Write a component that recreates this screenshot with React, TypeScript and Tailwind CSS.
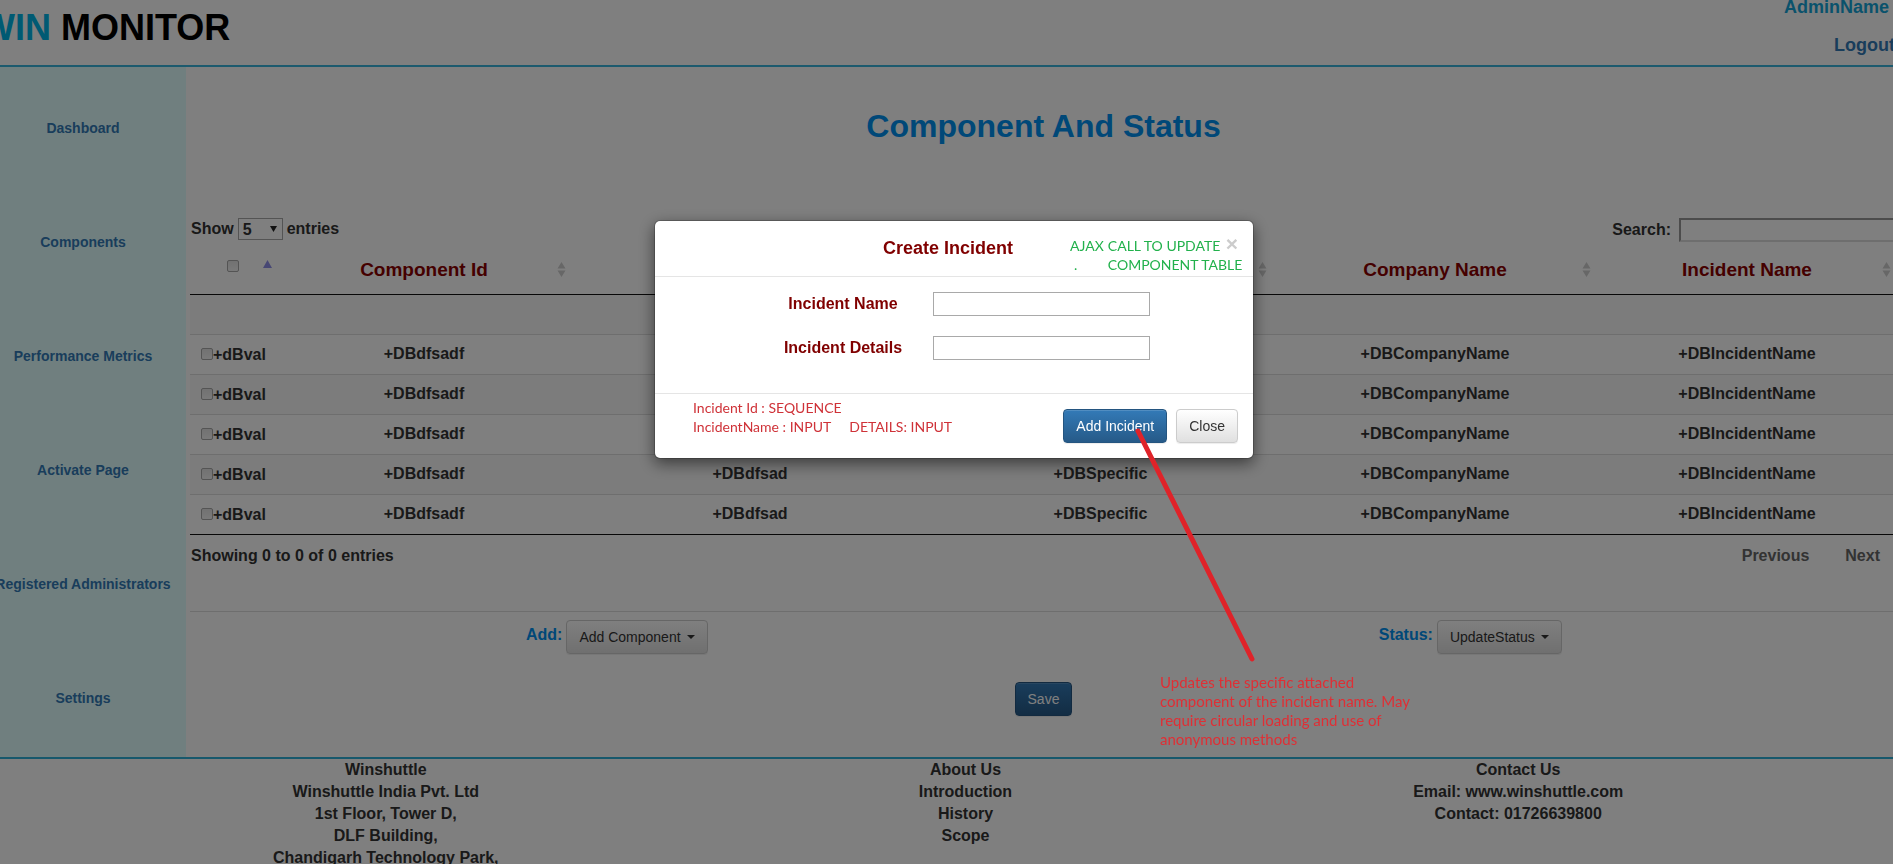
import type { ReactNode } from "react";

const navItems = [
  "Dashboard",
  "Components",
  "Performance Metrics",
  "Activate Page",
  "Registered Administrators",
  "Settings",
];

const columns = [
  { label: "Component Id", width: "w-[296px]" },
  { label: "Component Name", width: "w-[356px]" },
  { label: "Specific Status", width: "w-[345px]" },
  { label: "Company Name", width: "w-[324px]" },
  { label: "Incident Name", width: "w-[300px]" },
];

const rows = Array.from({ length: 5 }, () => [
  "+DBdfsadf",
  "+DBdfsad",
  "+DBSpecific",
  "+DBCompanyName",
  "+DBIncidentName",
]);

const footerColumns = [
  ["Winshuttle", "Winshuttle India Pvt. Ltd", "1st Floor, Tower D,", "DLF Building,", "Chandigarh Technology Park,"],
  ["About Us", "Introduction", "History", "Scope"],
  ["Contact Us", "Email: www.winshuttle.com", "Contact: 01726639800"],
];

function SortIcon() {
  return (
    <svg className="absolute right-1.5 top-5" width="9" height="15" viewBox="0 0 9 15" aria-hidden="true">
      <path d="M4.5 0 8.5 6.5h-8z M4.5 15 8.5 8.5h-8z" fill="#cfcfcf" />
    </svg>
  );
}

function Checkbox({ label }: { label: string }) {
  return (
    <input
      type="checkbox"
      aria-label={label}
      className="size-3 shrink-0 appearance-none rounded-[2px] border border-[#a8a8a8] bg-linear-to-b from-[#e4e4e4] to-[#f4f4f4]"
    />
  );
}

function DefaultButton({ children }: { children: ReactNode }) {
  return (
    <button
      type="button"
      className="inline-flex h-[34px] items-center gap-1.5 rounded border border-[#ccc] bg-linear-to-b from-white to-[#e0e0e0] px-3 text-sm font-normal text-[#333] shadow-[inset_0_1px_0_rgba(255,255,255,0.15),0_1px_1px_rgba(0,0,0,0.075)]"
    >
      {children}
    </button>
  );
}

function PrimaryButton({ children }: { children: ReactNode }) {
  return (
    <button
      type="button"
      className="inline-flex h-[34px] items-center rounded border border-[#245580] bg-linear-to-b from-[#337ab7] to-[#265a88] px-3 text-sm font-normal text-white shadow-[inset_0_1px_0_rgba(255,255,255,0.15),0_1px_1px_rgba(0,0,0,0.075)]"
    >
      {children}
    </button>
  );
}

function Caret() {
  return (
    <svg width="8" height="4" viewBox="0 0 8 4" aria-hidden="true">
      <path d="M0 0h8L4 4z" fill="#333" />
    </svg>
  );
}

function Header() {
  return (
    <header className="flex h-[67px] justify-between border-b-2 border-[#39b5dc]">
      <h1 className="pt-2 pl-px text-4xl font-bold text-black">
        <span className="text-[#00b4e6]">WIN</span> MONITOR
      </h1>
      <div className="flex flex-col items-end gap-[13px] pr-0.5 text-lg/[25px]">
        <span className="-mt-[5px] pr-1.5 text-[#15a5d8]">AdminName</span>
        <a href="#logout" className="text-[#337ab7]">Logout</a>
      </div>
    </header>
  );
}

function Sidebar() {
  return (
    <nav className="w-[206px] shrink-0 bg-[#e0ffff] pt-1 text-sm text-[#337ab7]">
      <ul>
        {navItems.map((item) => (
          <li key={item} className="flex h-[114px] items-center justify-center whitespace-nowrap">
            <a href={"#" + item.toLowerCase().replace(" ", "-")}>{item}</a>
          </li>
        ))}
      </ul>
    </nav>
  );
}

function ComponentTable() {
  return (
    <table className="w-full table-fixed border-collapse text-center">
      <thead>
        <tr className="h-[52px] border-b border-[#111]">
          <th className="relative w-[86px] pb-0.5">
            <Checkbox label="Select all" />
            <svg className="absolute right-1 top-[18px]" width="9" height="8" viewBox="0 0 9 8" aria-hidden="true">
              <path d="M4.5 0 9 8H0z" fill="#8f8fe8" />
            </svg>
          </th>
          {columns.map((column) => (
            <th key={column.label} className={"relative pt-1 text-[19px] text-[#8b0000] " + column.width}>
              {column.label}
              <SortIcon />
            </th>
          ))}
        </tr>
      </thead>
      <tbody className="text-[#333]">
        <tr className="h-10 bg-[#f9f9f9]">
          <td colSpan={6} />
        </tr>
        {rows.map((row, index) => (
          <tr key={index} className="h-10 border-t border-[#ddd] last:border-b last:border-b-[#111] even:bg-white odd:bg-[#f9f9f9]">
            <td className="py-0">
              <label className="flex items-center pl-[11px]">
                <Checkbox label={"Select row " + (index + 1)} />
                <span className="pt-0.5">+dBval</span>
              </label>
            </td>
            {row.map((cell) => (
              <td key={cell} className="py-0">{cell}</td>
            ))}
          </tr>
        ))}
      </tbody>
    </table>
  );
}

function Main() {
  return (
    <main className="min-w-0 flex-1 pl-1">
      <h2 className="pt-[41px] text-center text-[32px]/[36px] text-[#0090f0]">Component And Status</h2>
      <div className="flex items-start justify-between pt-[74px]">
        <label className="flex items-center gap-1 pl-px">
          Show
          <span className="relative flex">
            <select className="h-[22px] w-[45px] appearance-none border border-[#a9a9a9] bg-white pl-1 font-bold">
              <option>5</option>
            </select>
            <svg className="pointer-events-none absolute right-1.5 top-2" width="7" height="6" viewBox="0 0 7 6" aria-hidden="true">
              <path d="M0 0h7L3.5 6z" fill="#222" />
            </svg>
          </span>
          entries
        </label>
        <label className="flex items-center gap-2">
          Search:
          <input type="search" className="h-6 w-[218px] border-2 border-[#ddd] border-t-[#999] border-l-[#999] bg-white" />
        </label>
      </div>
      <ComponentTable />
      <div className="flex h-[77px] justify-between border-b border-[#ddd] pt-2.5">
        <p className="pl-px">Showing 0 to 0 of 0 entries</p>
        <div className="flex items-start gap-9 pr-[17px] text-[#666]">
          <button type="button">Previous</button>
          <button type="button">Next</button>
        </div>
      </div>
      <div className="grid grid-cols-2 pt-2">
        <div className="flex items-center justify-center gap-1">
          <span className="pb-1 text-[#0090f0]">Add:</span>
          <DefaultButton>Add Component <Caret /></DefaultButton>
        </div>
        <div className="flex items-center justify-center gap-1">
          <span className="pb-1 text-[#0090f0]">Status:</span>
          <DefaultButton>UpdateStatus <Caret /></DefaultButton>
        </div>
      </div>
      <div className="flex justify-center pt-7">
        <PrimaryButton>Save</PrimaryButton>
      </div>
    </main>
  );
}

function Footer() {
  return (
    <footer className="grid grid-cols-[812fr_348fr_758fr] border-t-2 border-[#2fb0d8] text-center">
      {footerColumns.map((lines) => (
        <div key={lines[0]}>
          {lines.map((line) => (
            <p key={line} className="leading-[22px]">{line}</p>
          ))}
        </div>
      ))}
    </footer>
  );
}

function IncidentDialog() {
  return (
    <div
      role="dialog"
      aria-labelledby="dialog-title"
      className="relative w-[600px] rounded-md border border-black/20 bg-white bg-clip-padding shadow-[0_5px_15px_rgba(0,0,0,0.5)]"
    >
      <div className="flex h-14 items-center justify-center border-b border-[#e5e5e5] pr-3 pb-0.5">
        <h3 id="dialog-title" className="text-lg text-[#800000]">Create Incident</h3>
        <button type="button" aria-label="Close dialog" className="absolute right-[15px] top-[11px] text-[21px]/[24px] font-bold text-[#ccc]">
          ×
        </button>
      </div>
      <form className="flex flex-col gap-5 pt-[15px] pb-[33px] pl-[98px] text-[#800000]">
        <div className="flex items-center">
          <label htmlFor="incident-name" className="w-[180px] text-center">Incident Name</label>
          <input id="incident-name" type="text" className="h-6 w-[217px] border border-[#a9a9a9] px-1" />
        </div>
        <div className="flex items-center">
          <label htmlFor="incident-details" className="w-[180px] text-center">Incident Details</label>
          <input id="incident-details" type="text" className="h-6 w-[217px] border border-[#a9a9a9] px-1" />
        </div>
      </form>
      <div className="flex justify-end gap-[9px] border-t border-[#e5e5e5] p-[15px]">
        <PrimaryButton>Add Incident</PrimaryButton>
        <DefaultButton>Close</DefaultButton>
      </div>

      <div className="absolute left-[415px] top-[15px] flex gap-1 font-[Lato,sans-serif] text-sm/[19px] font-normal whitespace-nowrap text-[#22b14c]">
        <p>
          AJAX
          <br />
          <span className="pl-1">.</span>
        </p>
        <p>
          CALL TO UPDATE
          <br />
          COMPONENT TABLE
        </p>
      </div>
      <div className="absolute left-[38px] top-[177px] font-[Lato,sans-serif] text-sm/[19px] font-normal whitespace-nowrap text-[#cf3238]">
        <p>Incident Id : SEQUENCE</p>
        <p className="flex gap-[18px]">
          <span>IncidentName : INPUT</span>
          <span>DETAILS: INPUT</span>
        </p>
      </div>
      <svg className="pointer-events-none absolute left-[478px] top-[205px]" width="124" height="238" viewBox="0 0 124 238" aria-hidden="true">
        <path d="M5 5 119 233" stroke="#df2329" strokeWidth="5" strokeLinecap="round" fill="none" />
      </svg>
      <p className="absolute left-[505px] top-[452px] w-[260px] font-[Lato,sans-serif] text-[15px]/[19px] font-normal text-[#df2f35]">
        Updates the specific attached
        <br />
        component of the incident name. May
        <br />
        require circular loading and use of
        <br />
        anonymous methods
      </p>
    </div>
  );
}

export default function App() {
  return (
    <div className="h-screen overflow-hidden bg-white font-['Liberation_Sans',Arial,sans-serif] text-base/[22px] font-bold text-[#333]">
      <div className="-mr-1 -ml-5">
        <Header />
        <div className="flex min-h-[690px]">
          <Sidebar />
          <Main />
        </div>
        <Footer />
      </div>
      <div className="fixed inset-0 bg-black/50" />
      <div className="fixed inset-0 flex items-start justify-center pt-[220px] pl-[15px]">
        <IncidentDialog />
      </div>
    </div>
  );
}
